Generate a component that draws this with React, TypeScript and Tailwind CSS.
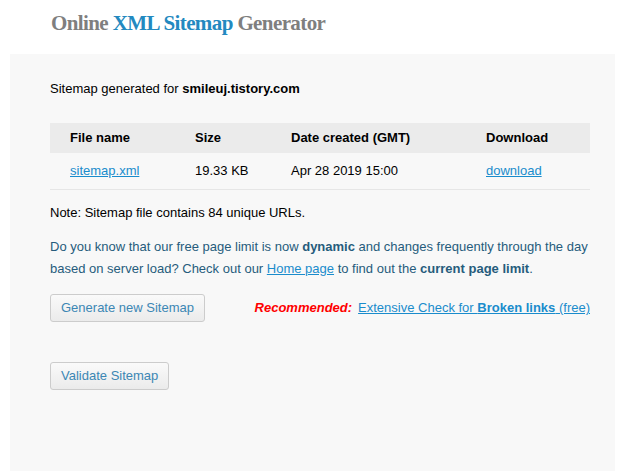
export default function App() {
  return (
    <div className="min-h-[471px] bg-white font-['Liberation_Sans',Arial,sans-serif] text-[13px]">
      {/* Title */}
      <div className="h-[54px] pl-[51px] pt-[9px]">
        <h1 className="font-['Liberation_Serif',Georgia,serif] text-[21px] font-bold leading-[28px] tracking-[-0.6px] text-[#7f7f7f]">
          Online <span className="text-[#2389c0]">XML Sitemap</span> Generator
        </h1>
      </div>

      {/* Panel */}
      <div className="ml-[10px] w-[605px] h-[417px] bg-[#f8f8f8] pl-[40px] pt-[27px]">
        <p className="leading-[16px] text-black">
          Sitemap generated for <b>smileuj.tistory.com</b>
        </p>

        <table className="mt-[26px] w-[540px] border-collapse text-left">
          <thead>
            <tr className="h-[30px] bg-[#ebebeb] text-black">
              <th className="w-[145px] pl-[20px] font-bold">File name</th>
              <th className="w-[96px] font-bold">Size</th>
              <th className="w-[195px] font-bold">Date created (GMT)</th>
              <th className="font-bold">Download</th>
            </tr>
          </thead>
          <tbody>
            <tr className="h-[36px] border-b border-[#e6e6e6] text-black">
              <td className="pl-[20px]">
                <a href="#" className="text-[#1a8ccc] underline">sitemap.xml</a>
              </td>
              <td>19.33 KB</td>
              <td>Apr 28 2019 15:00</td>
              <td>
                <a href="#" className="text-[#1a8ccc] underline">download</a>
              </td>
            </tr>
          </tbody>
        </table>

        <p className="mt-[15px] leading-[16px] text-black">
          Note: Sitemap file contains 84 unique URLs.
        </p>

        <p className="mt-[15px] w-[545px] leading-[22px] text-[#265c7c]">
          Do you know that our free page limit is now <b>dynamic</b> and changes frequently through the day
          based on server load? Check out our{" "}
          <a href="#" className="text-[#1a8ccc] underline">Home page</a> to find out the{" "}
          <b>current page limit</b>.
        </p>

        <div className="mt-[14px] flex w-[540px] items-center justify-between">
          <button className="h-[28px] rounded-[3px] border border-[#cccccc] bg-gradient-to-b from-[#fafafa] to-[#ebebeb] px-[10px] text-[13px] text-[#3c87b4]">
            Generate new Sitemap
          </button>
          <div className="flex items-center gap-[6px]">
            <span className="font-bold italic text-[#ff0000]">Recommended:</span>
            <a href="#" className="text-[#1a8ccc] underline">
              Extensive Check for <b>Broken links</b> (free)
            </a>
          </div>
        </div>

        <button className="mt-[40px] h-[28px] rounded-[3px] border border-[#cccccc] bg-gradient-to-b from-[#fafafa] to-[#ebebeb] px-[10px] text-[13px] text-[#3c87b4]">
          Validate Sitemap
        </button>
      </div>
    </div>
  );
}
